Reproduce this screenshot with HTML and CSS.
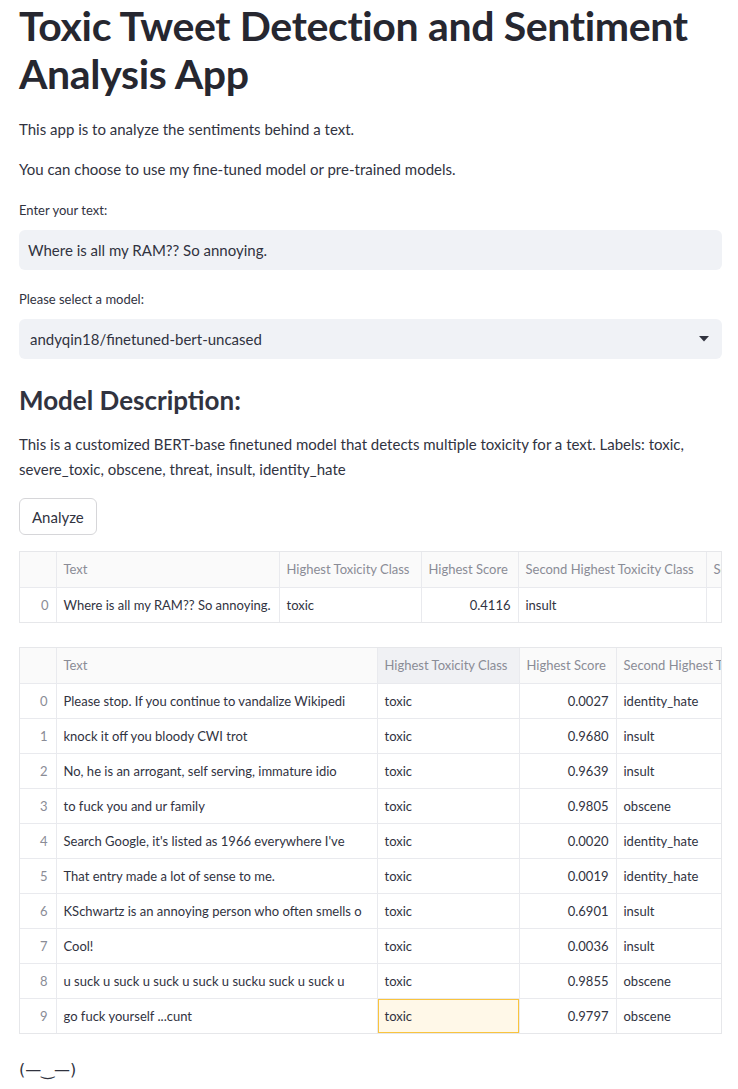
FILE: index.html
```html
<!DOCTYPE html>
<html lang="en">
<head>
<meta charset="utf-8">
<title>Toxic Tweet Detection and Sentiment Analysis App</title>
<link rel="stylesheet" href="styles.css">
</head>
<body>
<main class="main">
  <h1 class="title">Toxic Tweet Detection and Sentiment Analysis App</h1>
  <p class="para p1">This app is to analyze the sentiments behind a text.</p>
  <p class="para p2">You can choose to use my fine-tuned model or pre-trained models.</p>

  <label class="label lbl1">Enter your text:</label>
  <div class="input">Where is all my RAM?? So annoying.</div>

  <label class="label lbl2">Please select a model:</label>
  <div class="select">
    <span class="select-value">andyqin18/finetuned-bert-uncased</span>
    <svg class="caret" width="10" height="6" viewBox="0 0 10 6"><path d="M0 0 H10 L5 5.5 Z" fill="#31333f"/></svg>
  </div>

  <h2 class="subtitle">Model Description:</h2>
  <p class="para desc">This is a customized BERT-base finetuned model that detects multiple toxicity for a text. Labels: toxic, severe_toxic, obscene, threat, insult, identity_hate</p>

  <button class="btn">Analyze</button>

  <div class="frame t1">
    <table class="grid">
      <colgroup><col style="width:36px"><col style="width:223px"><col style="width:142px"><col style="width:97px"><col style="width:188px"><col style="width:160px"></colgroup>
      <thead><tr><th></th><th>Text</th><th>Highest Toxicity Class</th><th>Highest Score</th><th>Second Highest Toxicity Class</th><th>Second Highest Score</th></tr></thead>
      <tbody><tr><td class="idx">0</td><td>Where is all my RAM?? So annoying.</td><td>toxic</td><td class="num">0.4116</td><td>insult</td><td class="num">0.2260</td></tr></tbody>
    </table>
  </div>

  <div class="frame t2">
    <table class="grid grid2">
      <colgroup><col style="width:36px"><col style="width:321px"><col style="width:142px"><col style="width:97px"><col style="width:188px"><col style="width:160px"></colgroup>
      <thead><tr><th></th><th>Text</th><th class="sel">Highest Toxicity Class</th><th>Highest Score</th><th>Second Highest Toxicity Class</th><th>Second Highest Score</th></tr></thead>
      <tbody>
        <tr><td class="idx">0</td><td>Please stop. If you continue to vandalize Wikipedi</td><td>toxic</td><td class="num">0.0027</td><td>identity_hate</td><td class="num">0.0010</td></tr>
        <tr><td class="idx">1</td><td>knock it off you bloody CWI trot</td><td>toxic</td><td class="num">0.9680</td><td>insult</td><td class="num">0.5000</td></tr>
        <tr><td class="idx">2</td><td>No, he is an arrogant, self serving, immature idio</td><td>toxic</td><td class="num">0.9639</td><td>insult</td><td class="num">0.6000</td></tr>
        <tr><td class="idx">3</td><td>to fuck you and ur family</td><td>toxic</td><td class="num">0.9805</td><td>obscene</td><td class="num">0.7000</td></tr>
        <tr><td class="idx">4</td><td>Search Google, it's listed as 1966 everywhere I've</td><td>toxic</td><td class="num">0.0020</td><td>identity_hate</td><td class="num">0.0010</td></tr>
        <tr><td class="idx">5</td><td>That entry made a lot of sense to me.</td><td>toxic</td><td class="num">0.0019</td><td>identity_hate</td><td class="num">0.0010</td></tr>
        <tr><td class="idx">6</td><td>KSchwartz is an annoying person who often smells o</td><td>toxic</td><td class="num">0.6901</td><td>insult</td><td class="num">0.3000</td></tr>
        <tr><td class="idx">7</td><td>Cool!</td><td>toxic</td><td class="num">0.0036</td><td>insult</td><td class="num">0.0010</td></tr>
        <tr><td class="idx">8</td><td>u suck u suck u suck u suck u sucku suck u suck u</td><td>toxic</td><td class="num">0.9855</td><td>obscene</td><td class="num">0.8000</td></tr>
        <tr><td class="idx">9</td><td>go fuck yourself ...cunt</td><td class="hl">toxic</td><td class="num">0.9797</td><td>obscene</td><td class="num">0.8000</td></tr>
      </tbody>
    </table>
  </div>

  <p class="para kao">(—‿—)</p>
</main>
</body>
</html>
```

FILE: styles.css
```css
* { box-sizing: border-box; }
html, body { margin: 0; padding: 0; background: #ffffff; }
body {
  font-family: "Lato", sans-serif;
  color: #31333f;
  width: 738px;
  overflow: hidden;
}
.main {
  padding: 0 16px 0 19px;
  display: flex;
  flex-direction: column;
  align-items: flex-start;
}
.main > * { width: 100%; }

.title {
  margin: 0;
  padding-top: 2px;
  font-size: 41px;
  line-height: 48px;
  font-weight: 700;
  color: #262730;
  letter-spacing: -0.35px;
}
.para {
  margin: 0;
  font-size: 15px;
  line-height: 24px;
}
.p1 { margin-top: 19px; }
.p2 { margin-top: 16px; }

.label {
  display: block;
  font-size: 13px;
  line-height: 20px;
  margin-top: 19px;
}
.input, .select {
  margin-top: 10px;
  height: 40px;
  background: #f0f2f6;
  border-radius: 6px;
  font-size: 15px;
  display: flex;
  align-items: center;
}
.input { padding: 0 9px; }
.select { padding: 0 12px 0 11px; justify-content: space-between; }
.caret { flex: none; margin-right: 1px; }

.subtitle {
  margin: 24px 0 0;
  font-size: 26px;
  line-height: 34px;
  font-weight: 700;
  color: #31333f;
}
.desc { margin-top: 15px; line-height: 25px; }

.btn {
  width: auto;
  margin-top: 16px;
  height: 37px;
  padding: 0 12px;
  font-family: inherit;
  font-size: 15px;
  color: #31333f;
  background: #ffffff;
  border: 1px solid #d6d6d9;
  border-radius: 6px;
}

.frame {
  border: 1px solid #e6e7ea;
  overflow: hidden;
}
.t1 { margin-top: 16px; }
.t2 { margin-top: 24px; }

.grid {
  table-layout: fixed;
  border-collapse: collapse;
  width: 846px;
  font-size: 13px;
}
.grid th, .grid td {
  white-space: nowrap;
  overflow: hidden;
  padding: 0 7px;
  border-right: 1px solid #e9eaee;
  border-bottom: 1px solid #e9eaee;
  text-align: left;
  height: 35px;
}
.grid tbody tr:last-child td { border-bottom: none; }
.grid th {
  font-weight: 400;
  color: #8a8c96;
  background: #fafafa;
}
.grid td.idx { text-align: right; color: #8a8c96; }
.grid td.num { text-align: right; }

.grid2 { width: 944px; font-family: "Lato", sans-serif; font-size: 13px; }
.grid2 th, .grid2 td { height: 35px; }
.grid2 td.idx { text-align: center; padding-left: 12px; padding-right: 0; }
.grid2 th.sel { background: #f0f1f4; }
.grid2 td.hl {
  background: #fff8e8;
  box-shadow: inset 0 0 0 1px #f9c43e;
}

.kao { margin-top: 24px; font-size: 16px; font-family: "DejaVu Sans", sans-serif; }
```
